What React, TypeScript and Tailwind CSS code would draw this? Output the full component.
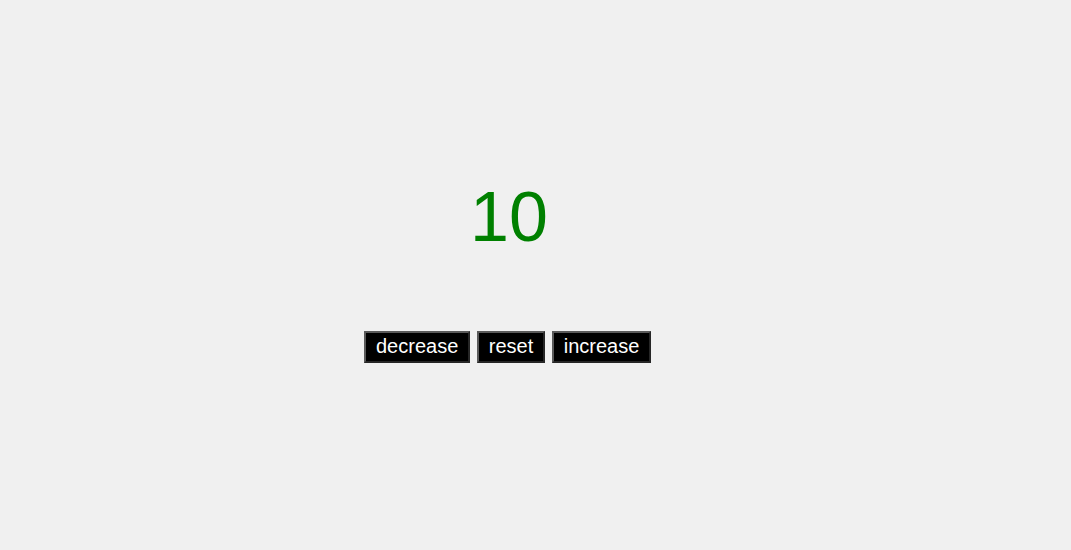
import React, { useState } from "react";

export default function App() {
  const [count, setCount] = useState(10);
  const btn =
    "bg-black text-white text-[20px] leading-[22px] px-[10px] pt-[2px] pb-[4px] border-2 border-t-[#5a5a5a] border-l-[#5a5a5a] border-b-[#262626] border-r-[#262626] cursor-pointer";
  return (
    <div
      className="w-full h-[550px] bg-[#f0f0f0] pt-[177px]"
      style={{ fontFamily: '"Liberation Sans", Arial, sans-serif' }}
    >
      <div className="ml-[365px] w-[288px] flex flex-col">
        <div className="text-center text-[70px] leading-[80px] text-[#008000]">{count}</div>
        <div className="mt-[74px] ml-[-1px] flex gap-[6.5px]">
          <button className={btn} onClick={() => setCount(count - 1)}>decrease</button>
          <button className={btn} onClick={() => setCount(0)}>reset</button>
          <button className={btn} onClick={() => setCount(count + 1)}>increase</button>
        </div>
      </div>
    </div>
  );
}
